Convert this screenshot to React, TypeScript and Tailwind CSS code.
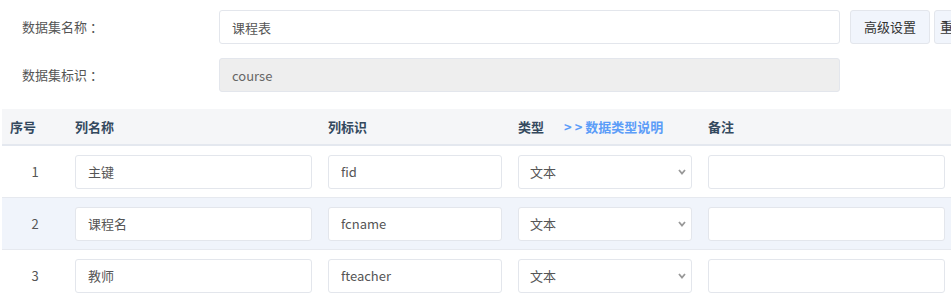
import React from "react";

const font = { fontFamily: '"Noto Sans CJK SC", "Noto Sans", sans-serif' };

const rows = [
  { no: 1, name: "主键", key: "fid", type: "文本" },
  { no: 2, name: "课程名", key: "fcname", type: "文本" },
  { no: 3, name: "教师", key: "fteacher", type: "文本" },
];

function TypeSelect({ value }: { value: string }) {
  return (
    <div className="relative w-[174px] h-[34px] shrink-0">
      <select
        defaultValue={value}
        className="appearance-none w-full h-full bg-white border border-[#e3e6ec] rounded-[3px] pl-[11px] text-[13px] text-[#555] outline-none"
      >
        <option>文本</option>
        <option>整数</option>
        <option>小数</option>
        <option>日期</option>
      </select>
      <svg
        className="absolute right-[6px] top-[14px] pointer-events-none"
        width="8"
        height="6"
        viewBox="0 0 8 6"
      >
        <path d="M1 1 L4 4.5 L7 1" stroke="#999" strokeWidth="1.8" fill="none" />
      </svg>
    </div>
  );
}

export default function App() {
  return (
    <div className="w-[951px] h-[298px] overflow-hidden bg-white text-[13px]" style={font}>
      {/* dataset form */}
      <div className="pt-[10px] pl-[22px] flex flex-col gap-[14px]">
        <div className="flex items-center h-[34px]">
          <span className="w-[197px] shrink-0 text-[#555]">数据集名称 ：</span>
          <input
            defaultValue="课程表"
            className="w-[621px] shrink-0 h-[34px] border border-[#e3e6ec] rounded-[3px] px-[12px] text-[#555] outline-none"
          />
          <button className="ml-[10px] w-[80px] h-[34px] shrink-0 bg-[#f1f5fc] border border-[#e3e6ec] rounded-[3px] text-[#333]">
            高级设置
          </button>
          <button className="ml-[4px] w-[60px] h-[34px] shrink-0 bg-[#f1f5fc] border border-[#e3e6ec] rounded-[3px] text-[#333] text-left pl-[5px]">
            重置
          </button>
        </div>
        <div className="flex items-center h-[34px]">
          <span className="w-[197px] shrink-0 text-[#555]">数据集标识 ：</span>
          <input
            defaultValue="course"
            disabled
            className="w-[621px] shrink-0 h-[34px] bg-[#eeeeee] border border-[#e3e6ec] rounded-[3px] px-[12px] text-[#666] outline-none"
          />
        </div>
      </div>

      {/* columns table */}
      <div className="ml-[2px] mt-[17px] w-[960px]">
        <div className="flex items-center h-[37px] bg-[#f5f6f8] border-b-2 border-[#e4e8ef] font-bold text-[#34495e]">
          <div className="w-[73px] shrink-0 pl-[8px]">序号</div>
          <div className="w-[253px] shrink-0">列名称</div>
          <div className="w-[190px] shrink-0">列标识</div>
          <div className="w-[190px] shrink-0 flex items-center">
            <span>类型</span>
            <span className="ml-[20px] text-[#5c9df8] cursor-pointer">
              <span className="tracking-[3px]">&gt;&gt;</span>数据类型说明
            </span>
          </div>
          <div>备注</div>
        </div>
        {rows.map((r, i) => (
          <div
            key={r.no}
            className={`flex items-center h-[52px] border-b border-[#e6e9ef] ${
              i === 1 ? "bg-[#f0f4fb]" : "bg-white"
            }`}
          >
            <div className="w-[66px] shrink-0 text-center text-[#555] mr-[7px]">{r.no}</div>
            <input
              defaultValue={r.name}
              className="w-[237px] shrink-0 h-[34px] bg-white border border-[#e3e6ec] rounded-[3px] px-[12px] text-[#555] outline-none"
            />
            <input
              defaultValue={r.key}
              className="ml-[16px] w-[174px] shrink-0 h-[34px] bg-white border border-[#e3e6ec] rounded-[3px] px-[12px] text-[#555] outline-none"
            />
            <div className="ml-[16px] shrink-0">
              <TypeSelect value={r.type} />
            </div>
            <input className="ml-[16px] w-[237px] shrink-0 h-[34px] bg-white border border-[#e3e6ec] rounded-[3px] px-[12px] text-[#555] outline-none" />
          </div>
        ))}
      </div>
    </div>
  );
}
